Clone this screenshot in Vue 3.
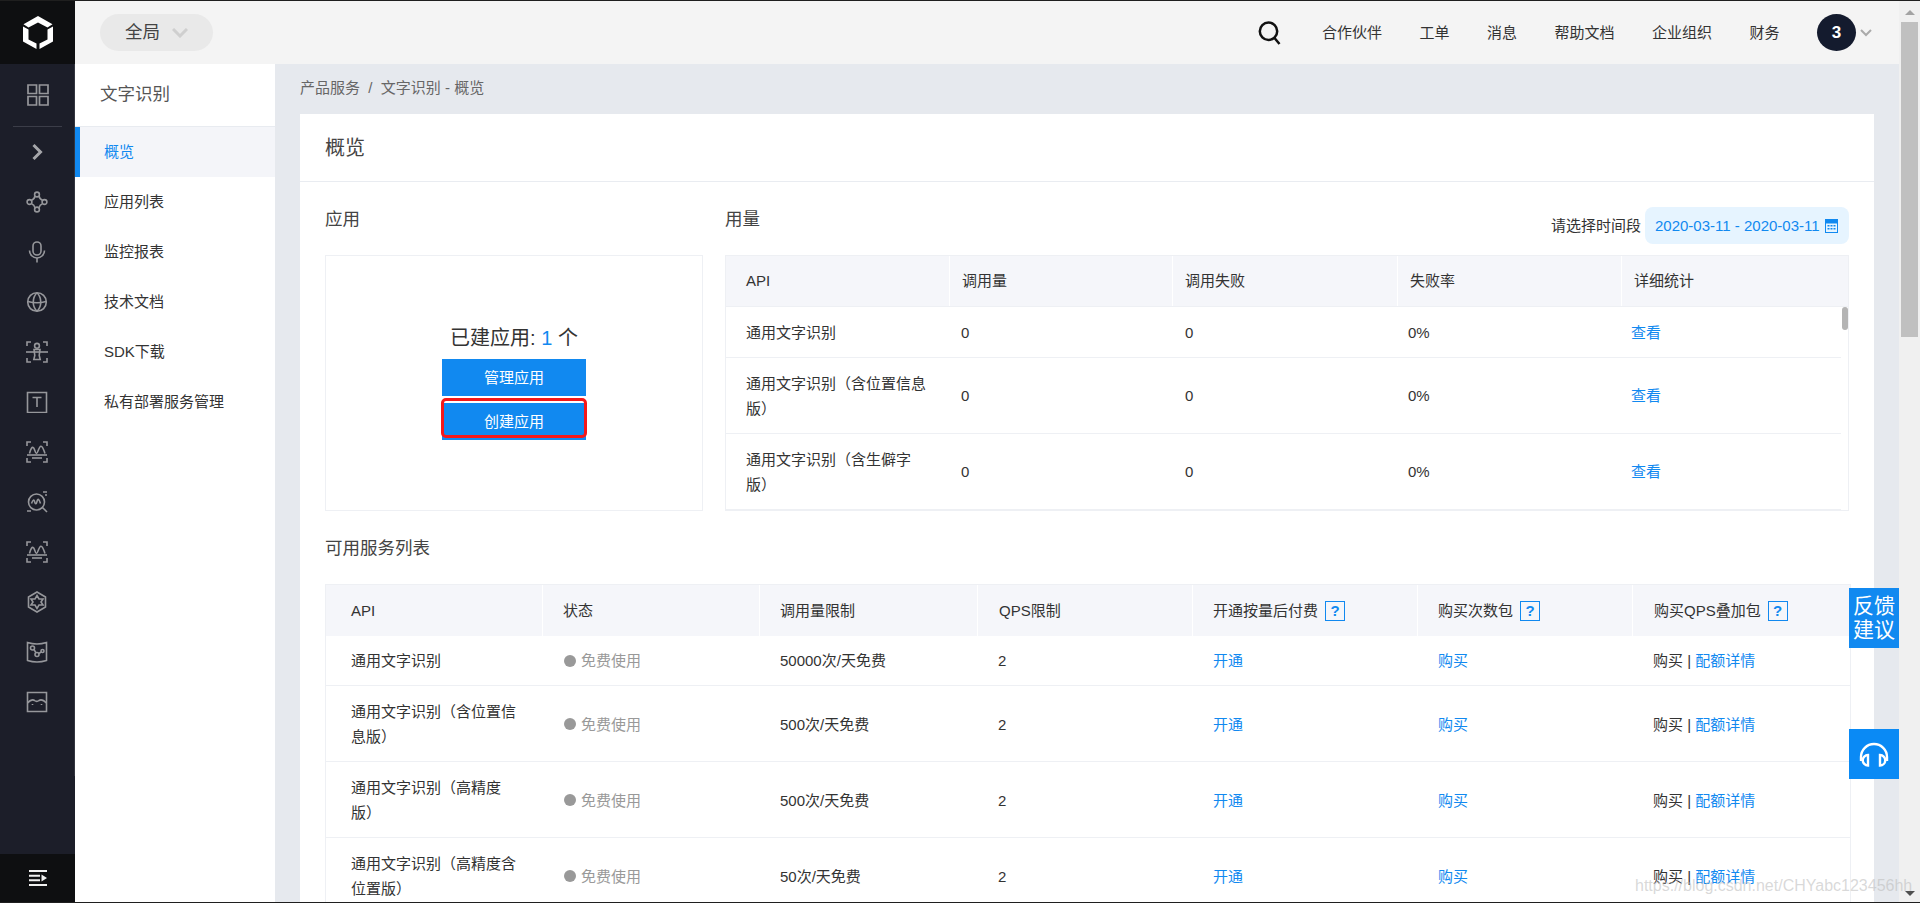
<script setup>
const c = (x, y, r) => `M${x - r} ${y}a${r} ${r} 0 1 0 ${2 * r} 0a${r} ${r} 0 1 0 ${-2 * r} 0`
const corners = 'M1 5V1h4M17 1h4v4M1 17v4h4M17 21h4v-4'
const railIcons = [
  { d: ['M7.500 4l7 7-7 7'], cls: 'chev' },
  { d: [c(11, 3.5, 2.4), c(3.5, 11, 2.4), c(18.5, 11, 2.4), c(11, 18.5, 2.4), 'M9 5C8.500 7.500 7.500 8.500 5.500 9.200M13 5c.5 2.500 1.500 3.500 3.500 4.200M5.500 12.800c2 .7 3 1.700 3.500 4M16.500 12.800c-2 .7-3 1.700-3.500 4'] },
  { d: ['M7 5a4 4 0 0 1 8 0v5a4 4 0 0 1-8 0z', 'M3.500 9.500a7.500 7.500 0 0 0 15 0', 'M11 17v4.500'] },
  { d: [c(11, 11, 9.3), 'M2 10.500c6 1.600 12 1.600 18 0', 'M11 1.700c-5 5-5 13.600 0 18.600M11 1.700c5 5 5 13.600 0 18.600'] },
  { d: [corners, c(11, 4.8, 2.4), 'M0 11h22', 'M8 8.500h6l-.8 6 1 4H7.800l1-4z'] },
  { d: ['M1.500 1.500h19v20h-19z', 'M6.500 6.500h9M11 6.500v9.500'] },
  { d: [corners, 'M3.500 12.500C5 7 6 6 7.200 6.500 8.700 7 9 12.500 10.500 12.500 12 12.500 12.800 5 15 5.200 17 5.400 18 10 19 12.500', 'M1 14h20', 'M6 17h10'] },
  { d: [c(10.5, 11, 8), 'M5.500 12.500c1.500-4 2.500-4.500 3.200-1.500.6 2.500 1.600 2.500 2.300-.5.8-3.200 2-3 3.500 2', 'M16.500 16.500L21 21', 'M17 1h4M19 4h2M1 20h4'] },
  { d: [corners, 'M3.500 12.500C5 7 6 6 7.200 6.500 8.700 7 9 12.500 10.500 12.500 12 12.500 12.800 5 15 5.200 17 5.400 18 10 19 12.500', 'M1 14h20', 'M6 17h10'] },
  { d: ['M11 1l8.500 5v10L11 21l-8.500-5V6z', 'M11 4.500l2 3.500h4l-2 3 2 3h-4l-2 3.500L9 14H5l2-3-2-3h4z'] },
  { d: ['M1.500 1.500q9.500 3 19 0v18q-9.500 3-19 0z', c(6.5, 7, 2), c(11, 13.5, 2), c(16.5, 10, 1.5), 'M8 8.500l2 3.300M13 12.500l2.200-1.600'] },
  { d: ['M1.500 1.500h19v19h-19z', 'M1.500 12c3-3 5-4 7-2.500 1.500 1.200 3 1.200 4.500 0 2-1.500 4.500-.5 7.500 2.500', 'M6.500 13v1M15.500 13v1'] },
]
const navItems = ['概览', '应用列表', '监控报表', '技术文档', 'SDK下载', '私有部署服务管理']
const topLinks = ['合作伙伴', '工单', '消息', '帮助文档', '企业组织', '财务']
const usageHead = ['API', '调用量', '调用失败', '失败率', '详细统计']
const usageRows = ['通用文字识别', '通用文字识别（含位置信息版）', '通用文字识别（含生僻字版）']
const serviceRows = [
  { name: '通用文字识别', limit: '50000次/天免费', tall: false },
  { name: '通用文字识别（含位置信息版）', limit: '500次/天免费', tall: true },
  { name: '通用文字识别（高精度版）', limit: '500次/天免费', tall: true },
  { name: '通用文字识别（高精度含位置版）', limit: '50次/天免费', tall: true },
]
</script>

<template>
  <div class="app">
    <div class="line"></div>
    <div class="shell">
      <aside class="rail">
        <div class="logo">
          <svg width="30" height="33" viewBox="0 0 30 33" fill="#fff">
            <path d="M15 0L29.500 8.300 24.500 11.500 15 6.500 5.500 11.500.5 8.300z" />
            <path d="M0 10.500L5.500 13.500V23.500L13.500 27.500V33L0 25.500z" />
            <path d="M30 10.500L24.500 13.500V23.500L16.500 27.500V33L30 25.500z" />
          </svg>
        </div>
        <div class="rail-list">
          <div class="rail-top">
            <svg width="22" height="22" viewBox="0 0 22 22" fill="none" stroke="#96979b" stroke-width="1.700">
              <path d="M1 1h8.500v8.500H1zM12.500 1H21v8.500h-8.500zM1 12.500h8.500V21H1zM12.500 12.500H21V21h-8.500z" />
            </svg>
          </div>
          <div v-for="(icon, i) in railIcons" :key="i" class="rail-item">
            <svg width="22" height="22" viewBox="0 0 22 22" fill="none" :stroke="icon.cls ? '#a5a6aa' : '#96979b'" :stroke-width="icon.cls ? 3 : 1.600">
              <path v-for="(d, j) in icon.d" :key="j" :d="d" />
            </svg>
          </div>
        </div>
        <div class="rail-foot">
          <svg width="18" height="16" viewBox="0 0 18 16" fill="#f0f0f0">
            <path d="M0 0h18v2H0zM0 4.700h11v2H0zM0 9.300h11v2H0zM0 14h18v2H0zM12.500 4.500L18 8l-5.500 3.500z" />
          </svg>
        </div>
      </aside>

      <div class="center">
        <header class="topbar">
          <div class="scope">
            <span>全局</span>
            <svg width="16" height="10" viewBox="0 0 16 10" fill="none" stroke="#cfcfcf" stroke-width="3"><path d="M1 1l7 7 7-7" /></svg>
          </div>
          <div class="top-right">
            <svg class="search" width="24" height="24" viewBox="0 0 24 24" fill="none" stroke="#111" stroke-width="2.500">
              <path d="M10.500 1.500a8.700 8.700 0 1 0 0 17.400a8.700 8.700 0 1 0 0-17.400zM16.500 17l5 6" />
            </svg>
            <a v-for="t in topLinks" :key="t" class="top-link">{{ t }}</a>
            <div class="avatar">3</div>
            <svg class="caret" width="12" height="8" viewBox="0 0 12 8" fill="none" stroke="#aaa" stroke-width="2"><path d="M1 1l5 5 5-5" /></svg>
          </div>
        </header>

        <div class="body">
          <nav class="subnav">
            <div class="subnav-title">文字识别</div>
            <a v-for="(n, i) in navItems" :key="n" class="subnav-item" :class="{ active: i === 0 }">{{ n }}</a>
          </nav>

          <main class="main">
            <div class="crumb">产品服务&nbsp; /&nbsp; 文字识别 - 概览</div>
            <section class="card">
              <div class="card-title">概览</div>
              <div class="card-inner">
                <div class="columns">
                  <div class="col-app">
                    <div class="sec-head"><h3>应用</h3></div>
                    <div class="app-box">
                      <div class="app-count">已建应用: <b>1</b> 个</div>
                      <button class="btn">管理应用</button>
                      <button class="btn second">创建应用<i class="ring"></i></button>
                    </div>
                  </div>
                  <div class="col-usage">
                    <div class="sec-head">
                      <h3>用量</h3>
                      <div class="range">
                        <span>请选择时间段</span>
                        <div class="pill">
                          2020-03-11 - 2020-03-11
                          <svg width="13" height="14" viewBox="0 0 13 14">
                            <path fill="#1189f0" d="M0 0h13v14H0z" />
                            <path fill="#e6f4ff" d="M1 4.500h11v8.500H1z" />
                            <path fill="#1189f0" d="M2.500 6h2v1.500h-2zM5.500 6h2v1.500h-2zM8.500 6h2v1.500h-2zM2.500 9h2v1.500h-2zM5.500 9h2v1.500h-2zM8.500 9h2v1.500h-2z" />
                          </svg>
                        </div>
                      </div>
                    </div>
                    <div class="usage">
                      <div class="usage-head">
                        <div v-for="h in usageHead" :key="h">{{ h }}</div>
                      </div>
                      <div v-for="(r, i) in usageRows" :key="r" class="usage-row" :class="{ tall: i > 0 }">
                        <div>{{ r }}</div>
                        <div>0</div>
                        <div>0</div>
                        <div>0%</div>
                        <div><a class="link">查看</a></div>
                      </div>
                      <i class="mini-thumb"></i>
                    </div>
                  </div>
                </div>

                <div class="sec-head"><h3>可用服务列表</h3></div>
                <div class="services">
                  <div class="svc-head">
                    <div>API</div>
                    <div>状态</div>
                    <div>调用量限制</div>
                    <div>QPS限制</div>
                    <div>开通按量后付费<span class="help">?</span></div>
                    <div>购买次数包<span class="help">?</span></div>
                    <div>购买QPS叠加包<span class="help">?</span></div>
                  </div>
                  <div v-for="r in serviceRows" :key="r.name" class="svc-row" :class="{ tall: r.tall }">
                    <div>{{ r.name }}</div>
                    <div class="status"><i></i>免费使用</div>
                    <div>{{ r.limit }}</div>
                    <div>2</div>
                    <div><a class="link">开通</a></div>
                    <div><a class="link">购买</a></div>
                    <div>购买 | <a class="link">配额详情</a></div>
                  </div>
                </div>
              </div>
            </section>
          </main>

          <div class="float feedback">反馈<br />建议</div>
          <div class="float support">
            <svg width="32" height="25" viewBox="0 0 32 25" fill="none" stroke="#fff" stroke-width="2.400">
              <path d="M3 19v-4a13 13 0 0 1 26 0v4" />
              <path d="M10 13v10.500a5.200 5.200 0 0 1 0-10.500zM22 13v10.500a5.200 5.200 0 0 0 0-10.500z" />
            </svg>
          </div>
        </div>
      </div>

      <div class="scrollbar">
        <i class="arrow up"></i>
        <div class="thumb"></div>
        <i class="arrow down"></i>
      </div>
    </div>
    <div class="line"></div>
    <div class="watermark">https://blog.csdn.net/CHYabc123456hh</div>
  </div>
</template>

<style>
html, body { margin: 0; overflow: hidden; background: #fff; }
</style>

<style scoped>
.app {
  position: relative;
  width: 1920px;
  height: 903px;
  display: flex;
  flex-direction: column;
  overflow: hidden;
  font: 15px/25px "Liberation Sans", "Noto Sans CJK SC", sans-serif;
  color: #333;
  text-spacing-trim: space-all;
}
.line { height: 1px; background: #1f1f1f; flex: none; }
.shell { flex: 1; display: flex; min-height: 0; }

.rail { width: 75px; flex: none; background: #1c1e29; display: flex; flex-direction: column; }
.logo { height: 63px; background: #0e0f11; display: flex; align-items: center; justify-content: center; flex: none; }
.rail-list { height: 712px; border-right: 1px solid #33353f; flex: none; }
.rail-top { height: 62px; margin: 0 12px 0 13px; border-bottom: 1px solid #3b3d48; display: flex; align-items: center; justify-content: center; }
.rail-item { height: 50px; display: flex; align-items: center; justify-content: center; }
.rail-foot { margin-top: auto; height: 48px; background: #0e0f11; display: flex; align-items: center; justify-content: center; }

.center { flex: 1; min-width: 0; display: flex; flex-direction: column; position: relative; }
.topbar { height: 63px; flex: none; background: #f4f4f4; display: flex; align-items: center; justify-content: space-between; padding: 0 27px 0 25px; box-sizing: border-box; }
.scope { width: 113px; height: 37px; border-radius: 19px; background: #e9e9e9; display: flex; align-items: center; justify-content: center; gap: 12px; font-size: 17.500px; color: #444; }
.top-right { display: flex; align-items: center; }
.search { margin-right: 40px; }
.top-link { margin-right: 37.500px; color: #333; }
.avatar { width: 39px; height: 37px; border-radius: 50%; background: #141b2e; color: #fff; font-weight: 700; font-size: 17px; display: flex; align-items: center; justify-content: center; }
.caret { margin-left: 4px; }

.body { flex: 1; display: flex; min-height: 0; }
.subnav { width: 200px; flex: none; background: #fff; display: flex; flex-direction: column; }
.subnav-title { height: 62px; line-height: 60px; padding-left: 25px; font-size: 17.500px; color: #555; border-bottom: 1px solid #e8ebf0; box-sizing: content-box; }
.subnav-item { height: 50px; line-height: 50px; padding-left: 29px; color: #333; }
.subnav-item.active { background: #f4f5f9; color: #1189f0; border-left: 5px solid #1189f0; padding-left: 24px; }

.main { flex: 1; min-width: 0; background: #e6e9ee; padding: 0 25px; overflow: hidden; }
.crumb { height: 50px; line-height: 48px; color: #666; }
.card { background: #fff; }
.card-title { height: 67px; line-height: 69px; padding-left: 25px; font-size: 20px; color: #444; border-bottom: 1px solid #e9ecf1; }
.card-inner { padding: 0 25px; }
.columns { display: flex; gap: 22px; }
.col-app { width: 378px; flex: none; }
.col-usage { flex: 1; min-width: 0; }
.sec-head { height: 73px; display: flex; justify-content: space-between; align-items: flex-start; box-sizing: border-box; padding-top: 25px; }
.sec-head h3 { margin: 0; font-size: 17.500px; line-height: 24px; font-weight: 400; color: #444; }
.range { display: flex; align-items: center; margin-top: 0; gap: 4px; }
.pill { height: 37px; width: 204px; box-sizing: border-box; padding-left: 10px; background: #e6f4ff; border-radius: 8px; color: #1189f0; display: flex; align-items: center; gap: 5px; }

.app-box { height: 256px; box-sizing: border-box; border: 1px solid #eef0f4; padding-top: 68px; display: flex; flex-direction: column; align-items: center; }
.app-count { font-size: 20px; line-height: 28px; color: #333; margin-bottom: 7px; }
.app-count b { font-weight: 400; color: #1189f0; }
.btn { position: relative; width: 144px; height: 37px; border: 0; padding: 0; background: #1189f0; color: #fff; font: inherit; flex: none; }
.second { margin-top: 7px; }
.ring { position: absolute; left: -1px; right: -1px; top: -5px; bottom: 2px; border: 3px solid #f5181a; border-radius: 5px; }

.usage { position: relative; height: 256px; box-sizing: border-box; border: 1px solid #eef0f4; overflow: hidden; }
.usage-head { display: grid; grid-template-columns: 223px 223px 225px 224px 1fr; height: 50px; background: #f5f6fa; border-bottom: 1px solid #eef0f4; align-items: stretch; line-height: 50px; }
.usage-head > div { padding-left: 12px; border-left: 1px solid #fff; }
.usage-head > div:first-child { padding-left: 20px; border-left: 0; }
.usage-row { display: grid; grid-template-columns: 222px 224px 223px 223px 1fr; margin-right: 7px; height: 51px; box-sizing: border-box; border-bottom: 1px solid #eef0f4; align-items: center; }
.usage-row.tall { height: 76px; }
.usage-row > div { padding: 0 13px; }
.usage-row > div:first-child { padding-left: 20px; }
.mini-thumb { position: absolute; right: 0; top: 51px; width: 6px; height: 23px; border-radius: 3px; background: #b4b4b4; }
.link { color: #1189f0; }

.services { width: calc(100% + 2px); border: 1px solid #eef0f4; border-bottom: 0; box-sizing: border-box; }
.svc-head, .svc-row { display: grid; grid-template-columns: 216px 217px 218px 215px 225px 215px 1fr; }
.svc-head { height: 51px; background: #f5f6fa; line-height: 51px; }
.svc-head > div { padding-left: 20px; border-left: 1px solid #fff; display: flex; align-items: center; }
.svc-head > div:first-child { padding-left: 25px; border-left: 0; }
.svc-head > div:nth-child(4), .svc-head > div:nth-child(7) { padding-left: 21px; }
.svc-row { height: 50px; box-sizing: border-box; border-bottom: 1px solid #eef0f4; align-items: center; }
.svc-row.tall { height: 76px; padding-top: 1px; }
.svc-row > div { padding: 0 21px; }
.svc-row > div:first-child { padding-left: 25px; }
.svc-row > .status { padding-left: 22px; }
.status { color: #999; display: flex; align-items: center; white-space: nowrap; }
.status i { width: 12px; height: 12px; border-radius: 50%; background: #999; margin-right: 5px; flex: none; }
.help { width: 18px; height: 18px; margin-left: 7px; border: 1px solid #1189f0; color: #1189f0; font-weight: 700; line-height: 18px; text-align: center; flex: none; }

.float { position: absolute; left: 1774px; width: 50px; color: #fff; background: #1189f0; display: flex; align-items: center; justify-content: center; }
.feedback { top: 587px; height: 60px; font-size: 21px; line-height: 24px; text-align: center; }
.support { top: 728px; height: 50px; background: #0a8af5; }

.scrollbar { width: 21px; flex: none; background: #f0f0f0; position: relative; box-sizing: border-box; padding: 21px 2px 0; }
.thumb { height: 315px; background: #c0c0c0; }
.arrow { position: absolute; left: 6px; width: 0; height: 0; border-left: 5px solid transparent; border-right: 5px solid transparent; }
.arrow.up { top: 9px; border-bottom: 5px solid #a3a3a3; }
.arrow.down { bottom: 6px; border-top: 5px solid #505050; }

.watermark { position: absolute; left: 1635px; top: 874px; font-size: 16px; line-height: 24px; color: rgba(185, 185, 185, 0.55); white-space: nowrap; pointer-events: none; }
</style>
